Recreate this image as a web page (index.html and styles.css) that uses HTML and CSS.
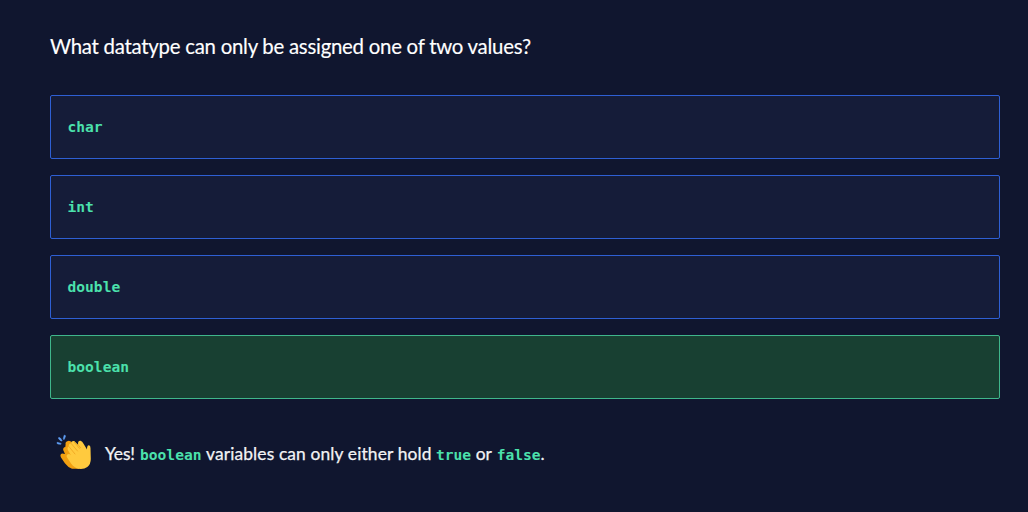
FILE: index.html
```html
<!DOCTYPE html>
<html lang="en">
<head>
<meta charset="utf-8">
<title>Quiz</title>
<link rel="stylesheet" href="styles.css">
</head>
<body>
<main class="quiz">
  <h1 class="question"><span>What datatype can only be assigned one of two values?</span></h1>
  <div class="options">
    <div class="option"><code>char</code></div>
    <div class="option"><code>int</code></div>
    <div class="option"><code>double</code></div>
    <div class="option correct"><code>boolean</code></div>
  </div>
  <div class="feedback">
    <svg class="clap" viewBox="0 0 50 50" aria-hidden="true">
      <g fill="#5e9df5" stroke="#5e9df5" stroke-width=".6" stroke-linejoin="round">
        <path d="M7.2 14.3 11 15.4Q11.5 16.2 10.7 16.3L7.6 15.9Q6.5 15 7.2 14.3Z"/>
        <path d="M8.5 9.7Q9.5 9.1 10.5 10.2L12 12.5Q12 13.4 11 12.9L8.8 11.1Z"/>
        <path d="M14.2 7.2Q15.7 7.1 15.4 8.4L14.3 11.3Q13.3 11.7 13.3 10.7Z"/>
      </g>
      <path fill="#f2a011" d="M11 29.5Q9.4 26.6 12.2 25.6L15 26 13.2 22Q12.9 19.3 15.3 19L15.6 16.5Q15 13.6 18 12.9 20.2 12.3 22 14.7L33 27 29 40.8H22Q18.2 39.5 14.9 35.2Z"/>
      <path fill="#ffca3e" d="M17.4 30.1Q15.5 27 18 26.2 19.5 25.7 21 27.2L17.8 22Q16.8 19.5 18.7 18.6 18.6 15.6 20.9 15.2 21.5 12.5 24.2 13.1L28.1 16.7Q27.5 12.5 30.6 12.8 32.2 13 33.7 16.1L37 21.4Q36.8 17.5 38.9 17.3 40.5 17.5 40.5 20.1L40.8 31Q40.8 36.2 37.3 39.1 34 41.5 28.5 40.8 24.5 40 21.2 35.8Z"/>
      <g fill="none" stroke="#eda31f" stroke-width=".8" stroke-linecap="round">
        <path d="M19.1 18.8 25 26M21.1 15.4 27.5 23M24.2 14.1 29.5 20.4M28.1 16.7 30.5 19.7"/>
      </g>
    </svg>
    <p class="message"><span class="yes">Yes!</span><code>boolean</code><span class="phrase">variables can only either hold</span><code>true</code><span class="or">or</span><code>false</code><span>.</span></p>
  </div>
</main>
</body>
</html>
```
FILE: styles.css
```css
* { box-sizing: border-box; }
body {
  margin: 0;
  background: #10162f;
  color: #fff;
  font-family: Lato, sans-serif;
}
.quiz { height: 512px; padding: 31px 28px 0 50px; }
.question {
  margin: 0;
  height: 64px;
  font-size: 20.4px;
  font-weight: 400;
  line-height: 30px;
  letter-spacing: -.26px;
  white-space: nowrap;
  -webkit-text-stroke: .15px;
}
.options { display: grid; gap: 16px; }
.option {
  display: flex;
  align-items: center;
  height: 64px;
  padding-left: 16.5px;
  border: 1px solid #2e5fd4;
  border-radius: 2px;
  background: #151c39;
}
.option.correct { border-color: #3fb68b; background: #184032; }
code {
  font-family: "DejaVu Sans Mono", monospace;
  font-size: 14.6px;
  font-weight: 700;
  line-height: 24px;
  color: #4be1ac;
  -webkit-text-stroke: 0;
}
.feedback { display: flex; margin-top: 29px; }
.clap { width: 50px; height: 50px; flex: none; }
.message {
  display: flex;
  align-items: baseline;
  margin: 14px 0 0 5px;
  font-size: 17.4px;
  line-height: 24px;
  white-space: nowrap;
  color: #f3f3f5;
  -webkit-text-stroke: .25px;
}
.yes { width: 35px; letter-spacing: -.1px; }
.phrase { width: 234.5px; padding-left: 4.5px; letter-spacing: .13px; }
.or { width: 25.5px; padding-left: 4.5px; }
```
